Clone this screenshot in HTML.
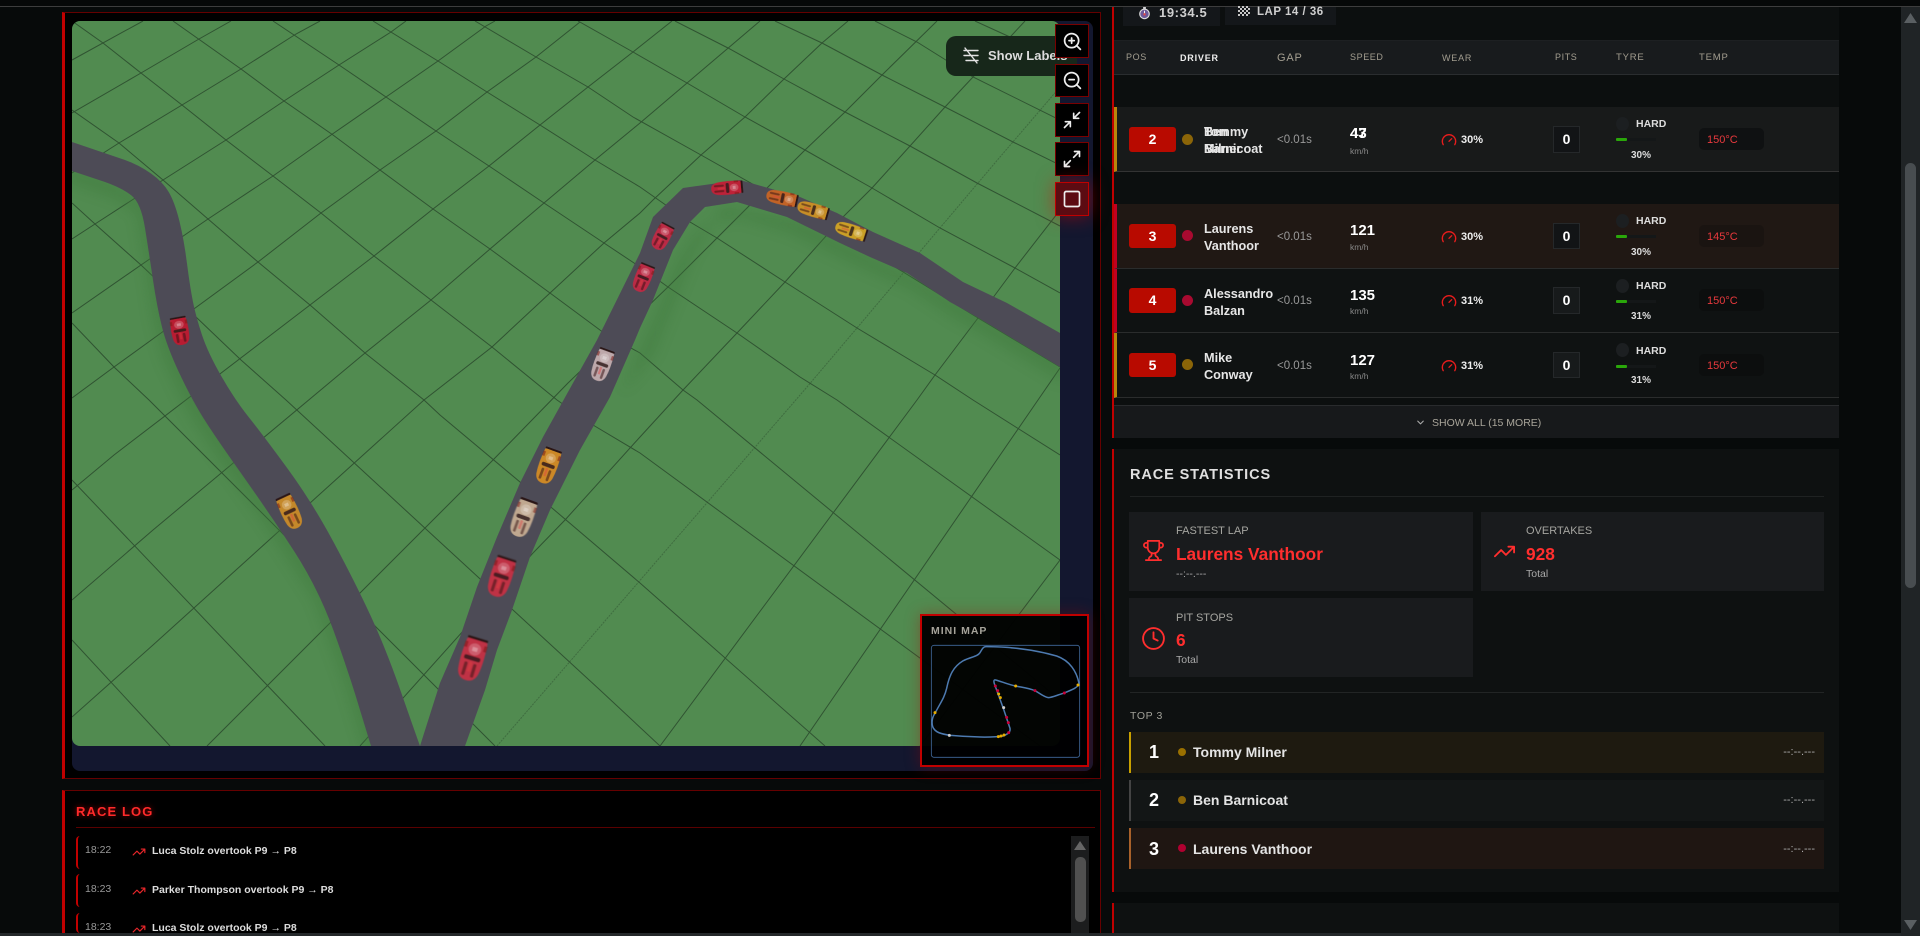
<!DOCTYPE html>
<html lang="en"><head><meta charset="utf-8"><title>Race Dashboard</title>
<style>
html,body{margin:0;padding:0;width:1920px;height:936px;overflow:hidden;background:#070a0a;font-family:"Liberation Sans",sans-serif;color:#ddd}
.a{position:absolute;box-sizing:border-box}
.t{position:absolute;white-space:nowrap;line-height:16px;height:16px}
.th{font-size:9.5px;letter-spacing:.8px;color:#a39e90}
.row{position:absolute;left:1114px;width:725px;box-sizing:border-box;border-bottom:1px solid #2a2c2c}
.badge{position:absolute;left:1129px;width:47px;background:#b80a00;border-radius:3px;color:#fff;font-weight:700;font-size:14px;text-align:center}
.dot{position:absolute;left:1182px;width:11px;height:11px;border-radius:50%}
.name{position:absolute;left:1204px;font-size:12.7px;font-weight:700;line-height:17px;color:#e6e6e6;white-space:nowrap}
.gap{font-size:11.5px;color:#999}
.sp{font-size:15px;font-weight:700;color:#fff}
.kmh{font-size:8.5px;color:#888}
.pct{font-size:11px;font-weight:700;color:#eee}
.pit{position:absolute;left:1553px;width:27px;border:1px solid #25282a;background:#121416;color:#fff;font-weight:700;font-size:14px;text-align:center;box-sizing:border-box}
.tc{position:absolute;left:1616px;width:13px;height:14px;border-radius:50%;background:#1c1f21}
.hard{font-size:10.5px;font-weight:700;color:#ddd;left:1636px}
.bar{position:absolute;left:1616px;width:40px;height:3px;background:#141718}
.bar i{display:block;width:11px;height:3px;background:#2aa70a;border-radius:1px}
.tp{font-size:10px;font-weight:700;color:#ddd;left:1631px}
.chip{position:absolute;left:1699px;width:65px;height:22px;border-radius:5px;background:#0f1112;color:#e8393d;font-size:11px;line-height:24px;padding-left:8px;box-sizing:border-box}
.card{position:absolute;background:#191b1d}
.lbl{font-size:11px;color:#a5a5a0}
.val{font-size:17.3px;font-weight:700;color:#ff2e2e}
.sub{font-size:10.5px;color:#aaa}
.ctl{position:absolute;left:1055px;width:34px;height:34px;background:#000;border:1px solid #7a0000;box-sizing:border-box;display:flex;align-items:center;justify-content:center}
.tr{position:absolute;left:1129px;width:695px;height:41px;box-sizing:border-box}
.tr .n{position:absolute;left:18px;top:0;line-height:41px;font-size:18px;font-weight:700;color:#fff}
.tr .d{position:absolute;left:47px;top:16px;width:8px;height:8px;border-radius:50%}
.tr .m{position:absolute;left:62px;top:0;line-height:41px;font-size:14px;font-weight:700;color:#e4e4e4;white-space:nowrap}
.tr .r{position:absolute;right:9px;top:0;line-height:41px;font-size:11px;color:#aaa}
.li{position:absolute;left:76px;width:6px;height:33px;border-left:2px solid #c00000;border-radius:4px 0 0 4px;box-sizing:border-box}
.lt{font-size:10.5px;color:#999;left:85px}
.lx{font-size:10.5px;font-weight:700;color:#ddd;left:152px}
svg.i{fill:none;stroke-linecap:round;stroke-linejoin:round}
</style></head><body>

<!-- top bar -->
<div class="a" style="left:0;top:0;width:1920px;height:6px;background:#060808"></div>
<div class="a" style="left:0;top:6px;width:1920px;height:1px;background:#3d3d3d"></div>

<!-- left panel -->
<div class="a" style="left:62px;top:12px;width:1039px;height:767px;background:#000;border:1px solid #650000;border-left:3px solid #c00000"></div>
<div class="a" style="left:72px;top:21px;width:1021px;height:750px;background:#13172f;border-radius:8px"></div>

<svg class="a" style="left:0;top:0" width="1920" height="936" viewBox="0 0 1920 936">
<defs>
<clipPath id="gc"><rect x="72" y="21" width="988" height="725" rx="8"/></clipPath>
<filter id="bl" x="-20%" y="-20%" width="140%" height="140%"><feGaussianBlur stdDeviation="6"/></filter>
<filter id="soft" x="-5%" y="-5%" width="110%" height="110%"><feGaussianBlur stdDeviation=".35"/></filter>
<filter id="cb" x="-30%" y="-30%" width="160%" height="160%"><feGaussianBlur stdDeviation=".45"/></filter>
<g id="car" filter="url(#cb)">
<path d="M-10-19Q-5-21 0-20Q5-21 10-19Q12 0 10 13Q8 22 0 22Q-8 22-10 13Q-12 0-10-19Z"/>
<rect x="-10" y="-22" width="20" height="2.5" rx="1" fill="#2a1616"/>
<ellipse cx="0" cy="-10" rx="6" ry="6" fill="#fff" opacity=".22"/>
<rect x="-2.5" y="-12" width="5" height="4" fill="#fff" opacity=".3"/>
<rect x="-8" y="-3" width="16" height="4.5" rx="2" fill="#321c1c" opacity=".85"/>
<rect x="-6" y="4" width="3.2" height="14" rx="1.5" fill="#3a1414" opacity=".55"/>
<rect x="2.8" y="4" width="3.2" height="14" rx="1.5" fill="#3a1414" opacity=".55"/>
<rect x="-1.5" y="3" width="3" height="10" fill="#e04040" opacity=".45"/>
<rect x="-11" y="-16" width="3" height="6" fill="#7a1a14" opacity=".55"/>
<rect x="8" y="-16" width="3" height="6" fill="#7a1a14" opacity=".55"/>
</g>
</defs>
<g clip-path="url(#gc)">
<rect x="72" y="21" width="988" height="725" fill="#518b50"/>
<g fill="none" stroke="#2b4a2d" stroke-width="1" opacity=".85">
<!-- family up-right -->
<path d="M72 60L143 21"/>
<path d="M72 113L141 73L199 39L231 21"/>
<path d="M72 173L119 143L182 105L241 69L296 34L320 21"/>
<path d="M72 239L95 224L163 180L226 140L284 101L339 65L391 32L406 21"/>
<path d="M72 313L141 265L208 219L273 176L331 135L386 97L438 61L486 26L495 21"/>
<path d="M72 398L114 367L161 333L258 262L321 213L380 170L436 131L487 92L536 57L580 22"/>
<path d="M72 490L114 455L310 305L374 256L433 209L489 166L540 125L588 87L633 52L672 21"/>
<path d="M72 600L153 530L365 353L431 300L490 249L544 203L595 160L640 123L760 21"/>
<path d="M72 717L153 645L424 400L492 347L550 293L604 243L640 213L653 200L701 155L745 117L784 79L822 43L848 21"/>
<path d="M207 746L440 513L493 460L568 383L668 287L717 238L805 150L845 112L882 75L937 21"/>
<path d="M360 746L533 553L565 520L640 437L683 390L737 333L785 282L843 217L872 188L910 146L945 107L973 77L1025 21"/>
<path d="M497 746L807 387L857 328L900 277L923 248L1000 157L1060 87" opacity=".55" stroke-dasharray="2 1"/>
<path d="M660 746L917 400L935 375L978 318L995 295L1015 268L1060 210"/>
<path d="M800 746L1038 400L1060 368"/>
<path d="M920 746L1060 560"/>
<!-- family down-right -->
<path d="M72 21L103 43L141 73L182 105L226 140L273 176L321 213L374 256L431 300L492 347L557 400L593 425L640 453L1040 746"/>
<path d="M173 21L241 69L284 101L333 135L380 170L433 209L490 249L550 293L604 333L640 353L683 390L697 400L1060 700"/>
<path d="M273 21L339 65L386 97L436 131L489 166L544 203L604 243L640 267L668 287L737 333L800 377L837 400L1060 560"/>
<path d="M373 21L438 61L487 92L540 125L595 160L640 187L690 222L717 238L785 282L857 328L935 375L973 400L1060 455"/>
<path d="M475 21L536 57L588 87L633 117L701 155L843 235L978 318L1060 367"/>
<path d="M578 21L633 52L687 83L745 117L805 150L872 188L940 228L1015 268L1060 293"/>
<path d="M675 21L728 48L784 79L845 112L910 146L977 183L1060 226"/>
<path d="M775 21L822 43L882 75L945 107L1015 143L1060 165"/>
<path d="M875 21L917 42L973 77L1060 120"/>
<path d="M975 21L1010 37L1060 60"/>
<path d="M72 110L119 143L163 180L208 219L258 262L310 305L365 353L424 400L440 415L520 482L552 508L640 583L825 746"/>
<path d="M72 203L95 224L141 265L196 317L241 360L286 400L440 542L478 577L513 610L600 690L660 746"/>
<path d="M72 323L114 367L149 400L495 746"/>
<path d="M72 480L325 746"/>
<path d="M72 640L170 746"/>
</g>
<g fill="#3f7a3d" opacity=".45" filter="url(#bl)">
<polygon transform="translate(-4,12)" points="72,171 122,188 141,203 149,253 157,307 167,347 192,400 216,438 270,514 318,588 349,673 371,746 395,746 330,570 230,420 185,340 165,200 120,170 72,150"/>
<polygon transform="translate(3,16)" points="1060,367 977,317 950,302 907,273 870,257 840,243 787,217 737,202 705,207 690,222 673,250 653,300 640,328 620,375 650,340 690,240 720,190 800,205 900,255 1060,340"/>
</g>
<g fill="#4d4c57" filter="url(#soft)">
<path d="M72 142L125 160Q139 165 151 173.5Q163 182 169 192.5Q175 203 179.5 221.5Q184 240 187 263.5Q190 287 193 302Q196 317 202 335Q208 353 221.5 376.5Q235 400 249 417.5Q263 435 287.5 468.5Q312 502 333.5 542Q355 582 370.5 615.5Q386 649 401 692Q416 735 420 746L371 746L360 710Q349 673 333.5 630.5Q318 588 294 551Q270 514 243 476Q216 438 204 419Q192 400 179.5 373.5Q167 347 162 327Q157 307 153 280Q149 253 145 228Q141 203 131.5 195.5Q122 188 105 182L72 171Z"/>
<polygon points="420,746 440,683 460,637 477,587 497,537 520,483 543,437 573,383 597,340 640,253 653,217 683,188 740,180 800,197 837,213 873,232 920,253 963,282 1007,303 1060,333 1060,367 977,317 950,302 907,273 870,257 840,243 787,217 737,202 705,207 690,222 673,250 653,300 640,328 635,340 610,397 580,450 550,510 530,557 512,610 497,650 485,690 465,746"/>
</g>
<use href="#car" fill="#b81c30" transform="translate(180,331) rotate(-10) scale(.8,.64)"/>
<use href="#car" fill="#c4882a" transform="translate(290,512) rotate(-25) scale(.8,.8)"/>
<use href="#car" fill="#bda8aa" transform="translate(602,365) rotate(20) scale(.78,.75)"/>
<use href="#car" fill="#cc8828" transform="translate(548,466) rotate(20) scale(.85,.82)"/>
<use href="#car" fill="#c0a890" transform="translate(523,518) rotate(20) scale(.9,.88)"/>
<use href="#car" fill="#bf3044" transform="translate(501,577) rotate(18) scale(.98,.92)"/>
<use href="#car" fill="#bf3044" transform="translate(472,659) rotate(17) scale(1.05,1)"/>
<use href="#car" fill="#bb2c44" transform="translate(662,237) rotate(28) scale(.72,.62)"/>
<use href="#car" fill="#bb2c44" transform="translate(643,278) rotate(22) scale(.74,.65)"/>
<use href="#car" fill="#bd2238" transform="translate(727,188) rotate(85) scale(.62,.72)"/>
<use href="#car" fill="#c26428" transform="translate(782,198) rotate(102) scale(.62,.72)"/>
<use href="#car" fill="#c68e28" transform="translate(813,210) rotate(106) scale(.62,.72)"/>
<use href="#car" fill="#cba028" transform="translate(851,231) rotate(108) scale(.62,.74)"/>
</g>
</svg>

<!-- show labels -->
<div class="a" style="left:946px;top:36px;width:131px;height:40px;background:#17271a;border-radius:10px"></div>
<svg class="i a" style="left:963px;top:47px" width="16" height="17" viewBox="0 0 16 17" stroke="#e2e2e2" stroke-width="1.4"><path d="M1 3.5H15M1 8.5H15M3 13.5H15M2 1L14 16"/></svg>
<div class="t" style="left:988px;top:48px;font-size:13px;font-weight:700;color:#dcdcdc">Show Labels</div>

<!-- controls -->
<div class="ctl" style="top:24px"><svg class="i" width="21" height="21" viewBox="0 0 24 24" stroke="#eee" stroke-width="2"><circle cx="11" cy="11" r="8"/><path d="M21 21l-4.35-4.35M11 8v6M8 11h6"/></svg></div>
<div class="ctl" style="top:64px;height:33px"><svg class="i" width="21" height="21" viewBox="0 0 24 24" stroke="#eee" stroke-width="2"><circle cx="11" cy="11" r="8"/><path d="M21 21l-4.35-4.35M8 11h6"/></svg></div>
<div class="ctl" style="top:103px"><svg class="i" width="20" height="20" viewBox="0 0 24 24" stroke="#eee" stroke-width="2"><path d="M4 14h6v6M20 10h-6V4M14 10l7-7M3 21l7-7"/></svg></div>
<div class="ctl" style="top:142px"><svg class="i" width="20" height="20" viewBox="0 0 24 24" stroke="#eee" stroke-width="2"><path d="M15 3h6v6M9 21H3v-6M21 3l-7 7M3 21l7-7"/></svg></div>
<div class="ctl" style="top:182px;background:#5c0b12;border-color:#c00000;box-shadow:0 0 18px rgba(230,0,0,.5)"><svg class="i" width="20" height="20" viewBox="0 0 24 24" stroke="#eee" stroke-width="2"><rect x="3" y="3" width="18" height="18" rx="2"/></svg></div>

<!-- mini map -->
<div class="a" style="left:920px;top:614px;width:169px;height:153px;background:rgba(0,0,0,.96);border:2px solid #c00000;box-shadow:0 0 14px rgba(170,0,0,.35)"></div>
<div class="t" style="left:931px;top:623px;font-size:10.5px;font-weight:700;letter-spacing:1px;color:#a6a39a">MINI MAP</div>
<svg class="a" style="left:900px;top:600px" width="220" height="180" viewBox="0 0 660 540">
<rect x="94" y="136" width="445" height="336" rx="8" fill="none" stroke="#41699c" stroke-width="2.4"/>
<path d="M258 140C330 140 400 148 470 168C510 182 530 215 537 250C535 262 520 268 490 280C470 286 455 293 445 293C430 290 420 280 405 272C385 264 365 262 347 258C325 254 300 243 287 240C280 238 281 246 284 254L310 325L330 385C332 398 322 402 310 408C280 413 210 412 150 406C125 402 105 398 98 380C94 365 98 350 105 340C120 310 133 295 140 265C148 225 160 200 190 182C215 170 232 170 240 158C247 146 250 140 258 140Z" fill="none" stroke="#4d7ab0" stroke-width="4.5"/>
<g fill="#e6ac00"><circle cx="347" cy="258" r="4.5"/><circle cx="534" cy="255" r="4.5"/><circle cx="105" cy="338" r="4.5"/><circle cx="296" cy="282" r="4.5"/><circle cx="301" cy="293" r="4.5"/><circle cx="295" cy="410" r="4.5"/><circle cx="303" cy="408" r="4.5"/><circle cx="312" cy="405" r="4.5"/></g>
<g fill="#c8003a"><circle cx="286" cy="258" r="4.5"/><circle cx="293" cy="272" r="4.5"/><circle cx="405" cy="272" r="4.5"/><circle cx="493" cy="279" r="4.5"/><circle cx="320" cy="352" r="4.5"/><circle cx="325" cy="368" r="4.5"/><circle cx="326" cy="398" r="4.5"/></g>
<g fill="#cfcfcf"><circle cx="311" cy="323" r="4.5"/><circle cx="148" cy="406" r="4.5"/></g>
</svg>

<!-- race log -->
<div class="a" style="left:62px;top:790px;width:1039px;height:143px;background:#000;border-top:1px solid #650000;border-right:1px solid #650000;border-left:3px solid #c00000"></div>
<div class="t" style="left:76px;top:804px;font-size:13px;font-weight:700;letter-spacing:1.1px;color:#ff2a2a;text-shadow:0 0 6px rgba(255,0,0,.6)">RACE LOG</div>
<div class="a" style="left:76px;top:827px;width:1019px;height:1px;background:#5a0000"></div>
<div class="li" style="top:836px"></div><div class="t lt" style="top:842px">18:22</div>
<svg class="i a" style="left:132px;top:845px" width="14" height="14" viewBox="0 0 24 24" stroke="#e8262a" stroke-width="2"><path d="M22 7l-8.5 8.5-5-5L2 17M16 7h6v6"/></svg>
<div class="t lx" style="top:843px">Luca Stolz overtook P9 → P8</div>
<div class="li" style="top:874px"></div><div class="t lt" style="top:881px">18:23</div>
<svg class="i a" style="left:132px;top:884px" width="14" height="14" viewBox="0 0 24 24" stroke="#e8262a" stroke-width="2"><path d="M22 7l-8.5 8.5-5-5L2 17M16 7h6v6"/></svg>
<div class="t lx" style="top:882px">Parker Thompson overtook P9 → P8</div>
<div class="li" style="top:913px;height:20px"></div><div class="t lt" style="top:919px">18:23</div>
<svg class="i a" style="left:132px;top:922px" width="14" height="14" viewBox="0 0 24 24" stroke="#e8262a" stroke-width="2"><path d="M22 7l-8.5 8.5-5-5L2 17M16 7h6v6"/></svg>
<div class="t lx" style="top:920px">Luca Stolz overtook P9 → P8</div>
<div class="a" style="left:1071px;top:836px;width:18px;height:97px;background:#1c1d1e"></div>
<div class="a" style="left:1075px;top:857px;width:11px;height:65px;background:#505050;border-radius:5px"></div>
<svg class="a" style="left:1074px;top:841px" width="12" height="9"><path d="M6 0L12 9H0Z" fill="#666"/></svg>

<!-- right column -->
<div class="a" style="left:1112px;top:7px;width:727px;height:431px;background:#0c0f0f;border-left:2px solid #c00000"></div>
<div class="a" style="left:1123px;top:7px;width:97px;height:19px;background:#14171a"></div>
<div class="a" style="left:1225px;top:7px;width:111px;height:18px;background:#14171a"></div>
<svg class="a" style="left:1139px;top:6px" width="11" height="14" viewBox="0 0 12 15"><circle cx="6" cy="8.5" r="5.2" fill="#6d5a9a" stroke="#dcdcdc" stroke-width="1.2"/><rect x="4.5" y="1" width="3" height="2" fill="#ddd"/><path d="M6 8.5V5" stroke="#fff"/><circle cx="6" cy="9" r="1.3" fill="#e04848"/></svg>
<div class="t" style="left:1159px;top:5px;font-size:13px;font-weight:700;letter-spacing:.6px;color:#cfcfcf">19:34.5</div>
<svg class="a" style="left:1238px;top:6px" width="12" height="11" viewBox="0 0 6 5.5"><path d="M0 0h1v1h-1zM2 0h1v1h-1zM4 0h1v1h-1zM1 1h1v1h-1zM3 1h1v1h-1zM5 1h1v1h-1zM0 2h1v1h-1zM2 2h1v1h-1zM4 2h1v1h-1zM1 3h1v1h-1zM3 3h1v1h-1zM5 3h1v1h-1zM0 4h1v1h-1zM2 4h1v1h-1zM4 4h1v1h-1z" fill="#c8c8c8"/></svg>
<div class="t" style="left:1257px;top:4px;font-size:11.5px;font-weight:700;letter-spacing:.5px;color:#cfcfcf">LAP 14 / 36</div>

<!-- table head -->
<div class="a" style="left:1114px;top:40px;width:725px;height:35px;background:#181b1d;border-bottom:1px solid #2a2d2f;border-top:1px solid #1d2022"></div>
<div class="t th" style="left:1126px;top:49px;font-size:9px;letter-spacing:.6px">POS</div>
<div class="t th" style="left:1180px;top:50px;color:#eee;font-weight:700;font-size:9px">DRIVER</div>
<div class="t th" style="left:1277px;top:50px;font-size:11px">GAP</div>
<div class="t th" style="left:1350px;top:49px;font-size:9px;letter-spacing:.6px">SPEED</div>
<div class="t th" style="left:1442px;top:50px;font-size:9px">WEAR</div>
<div class="t th" style="left:1555px;top:49px;font-size:9px;letter-spacing:.6px">PITS</div>
<div class="t th" style="left:1616px;top:50px">TYRE</div>
<div class="t th" style="left:1699px;top:50px">TEMP</div>

<!-- rows -->
<div class="row" style="top:107px;height:65px;background:#181a1a;border-left:3px solid #b8860b;border-bottom-color:#333"></div>
<div class="row" style="top:204px;height:65px;background:#201814;border-left:3px solid #c00020"></div>
<div class="row" style="top:269px;height:64px;background:#0f1212;border-left:3px solid #c00020"></div>
<div class="row" style="top:333px;height:65px;background:#0f1212;border-left:3px solid #b8860b"></div>

<!-- row 2 -->
<div class="badge" style="top:127px;height:25px;line-height:25px">2</div>
<div class="dot" style="top:134px;background:#8b6508"></div>
<div class="name" style="top:124px">Tommy<br>Milner</div><div class="name" style="top:124px">Ben<br>Barnicoat</div>
<div class="t gap" style="left:1277px;top:132px">&lt;0.01s</div>
<div class="t sp" style="left:1350px;top:126px">47</div><div class="t sp" style="left:1350px;top:126px">43</div>
<div class="t kmh" style="left:1350px;top:143px">km/h</div>
<svg class="i a" style="left:1441px;top:132px" width="16" height="16" viewBox="0 0 24 24" stroke="#e81c1c" stroke-width="2"><path d="M12 14l4-4M3.34 19a10 10 0 1 1 17.32 0"/></svg>
<div class="t pct" style="left:1461px;top:132px">30%</div>
<div class="pit" style="top:126px;height:27px;line-height:25px">0</div>
<div class="tc" style="top:117px"></div><div class="t hard" style="top:116px">HARD</div>
<div class="bar" style="top:138px"><i></i></div><div class="t tp" style="top:148px">30%</div>
<div class="chip" style="top:128px">150°C</div>

<!-- row 3 -->
<div class="badge" style="top:224px;height:24px;line-height:24px">3</div>
<div class="dot" style="top:230px;background:#a80a30"></div>
<div class="name" style="top:221px">Laurens<br>Vanthoor</div>
<div class="t gap" style="left:1277px;top:229px">&lt;0.01s</div>
<div class="t sp" style="left:1350px;top:223px">121</div>
<div class="t kmh" style="left:1350px;top:239px">km/h</div>
<svg class="i a" style="left:1441px;top:229px" width="16" height="16" viewBox="0 0 24 24" stroke="#e81c1c" stroke-width="2"><path d="M12 14l4-4M3.34 19a10 10 0 1 1 17.32 0"/></svg>
<div class="t pct" style="left:1461px;top:229px">30%</div>
<div class="pit" style="top:223px;height:26px;line-height:24px">0</div>
<div class="tc" style="top:214px"></div><div class="t hard" style="top:213px">HARD</div>
<div class="bar" style="top:235px"><i></i></div><div class="t tp" style="top:245px">30%</div>
<div class="chip" style="top:225px;background:#1a1411">145°C</div>

<!-- row 4 -->
<div class="badge" style="top:288px;height:25px;line-height:25px">4</div>
<div class="dot" style="top:295px;background:#a80a30"></div>
<div class="name" style="top:286px">Alessandro<br>Balzan</div>
<div class="t gap" style="left:1277px;top:293px">&lt;0.01s</div>
<div class="t sp" style="left:1350px;top:288px">135</div>
<div class="t kmh" style="left:1350px;top:303px">km/h</div>
<svg class="i a" style="left:1441px;top:293px" width="16" height="16" viewBox="0 0 24 24" stroke="#e81c1c" stroke-width="2"><path d="M12 14l4-4M3.34 19a10 10 0 1 1 17.32 0"/></svg>
<div class="t pct" style="left:1461px;top:293px">31%</div>
<div class="pit" style="top:287px;height:27px;line-height:25px;background:#171a1b">0</div>
<div class="tc" style="top:279px"></div><div class="t hard" style="top:278px">HARD</div>
<div class="bar" style="top:300px"><i></i></div><div class="t tp" style="top:309px">31%</div>
<div class="chip" style="top:289px;background:#0c0e0e">150°C</div>

<!-- row 5 -->
<div class="badge" style="top:353px;height:24px;line-height:24px">5</div>
<div class="dot" style="top:359px;background:#8b6508"></div>
<div class="name" style="top:350px">Mike<br>Conway</div>
<div class="t gap" style="left:1277px;top:358px">&lt;0.01s</div>
<div class="t sp" style="left:1350px;top:353px">127</div>
<div class="t kmh" style="left:1350px;top:368px">km/h</div>
<svg class="i a" style="left:1441px;top:358px" width="16" height="16" viewBox="0 0 24 24" stroke="#e81c1c" stroke-width="2"><path d="M12 14l4-4M3.34 19a10 10 0 1 1 17.32 0"/></svg>
<div class="t pct" style="left:1461px;top:358px">31%</div>
<div class="pit" style="top:352px;height:26px;line-height:24px;background:#171a1b">0</div>
<div class="tc" style="top:343px"></div><div class="t hard" style="top:343px">HARD</div>
<div class="bar" style="top:365px"><i></i></div><div class="t tp" style="top:373px">31%</div>
<div class="chip" style="top:354px;background:#0c0e0e">150°C</div>

<!-- show all -->
<div class="a" style="left:1114px;top:405px;width:725px;height:33px;background:#17191b;border-top:1px solid #292b2d"></div>
<svg class="i a" style="left:1415px;top:417px" width="11" height="11" viewBox="0 0 24 24" stroke="#aaa" stroke-width="2.4"><path d="M6 9l6 6 6-6"/></svg>
<div class="t" style="left:1432px;top:415px;font-size:10.5px;color:#a9a59a">SHOW ALL (15 MORE)</div>

<!-- stats panel -->
<div class="a" style="left:1112px;top:449px;width:727px;height:443px;background:#0e1111;border-left:2px solid #c00000"></div>
<div class="t" style="left:1130px;top:467px;font-size:14.5px;font-weight:700;letter-spacing:.9px;color:#e0e0e0">RACE STATISTICS</div>
<div class="a" style="left:1130px;top:496px;width:694px;height:1px;background:#1f2222"></div>

<div class="card" style="left:1129px;top:512px;width:344px;height:79px"></div>
<div class="card" style="left:1481px;top:512px;width:343px;height:79px"></div>
<div class="card" style="left:1129px;top:598px;width:344px;height:79px"></div>
<svg class="i a" style="left:1142px;top:539px" width="23" height="23" viewBox="0 0 24 24" stroke="#ff2e2e" stroke-width="1.8"><path d="M6 9H4.5a2.5 2.5 0 0 1 0-5H6M18 9h1.5a2.5 2.5 0 0 0 0-5H18M4 22h16M10 14.66V17c0 .55-.47.98-.97 1.21C7.85 18.75 7 20.24 7 22M14 14.66V17c0 .55.47.98.97 1.21C16.15 18.75 17 20.24 17 22M18 2H6v7a6 6 0 0 0 12 0V2Z"/></svg>
<div class="t lbl" style="left:1176px;top:523px">FASTEST LAP</div>
<div class="t val" style="left:1176px;top:546px">Laurens Vanthoor</div>
<div class="t sub" style="left:1176px;top:566px">--:--.---</div>
<svg class="i a" style="left:1493px;top:540px" width="23" height="23" viewBox="0 0 24 24" stroke="#ff2e2e" stroke-width="1.9"><path d="M22 7l-8.5 8.5-5-5L2 17M16 7h6v6"/></svg>
<div class="t lbl" style="left:1526px;top:523px">OVERTAKES</div>
<div class="t val" style="left:1526px;top:546px">928</div>
<div class="t sub" style="left:1526px;top:566px">Total</div>
<svg class="i a" style="left:1141px;top:626px" width="25" height="25" viewBox="0 0 24 24" stroke="#ff2e2e" stroke-width="1.8"><circle cx="12" cy="12" r="10"/><path d="M12 6v6l4 2"/></svg>
<div class="t lbl" style="left:1176px;top:610px">PIT STOPS</div>
<div class="t val" style="left:1176px;top:632px">6</div>
<div class="t sub" style="left:1176px;top:652px">Total</div>

<div class="a" style="left:1130px;top:692px;width:694px;height:1px;background:#222525"></div>
<div class="t" style="left:1130px;top:708px;font-size:10.5px;letter-spacing:.6px;color:#a0a098">TOP 3</div>

<div class="tr" style="top:732px;background:#1e1a10;border-left:2px solid #c8a000"><span class="n">1</span><span class="d" style="background:#9a7000"></span><span class="m">Tommy Milner</span><span class="r">--:--.---</span></div>
<div class="tr" style="top:780px;background:#131616;border-left:2px solid #444"><span class="n">2</span><span class="d" style="background:#8b6508"></span><span class="m">Ben Barnicoat</span><span class="r">--:--.---</span></div>
<div class="tr" style="top:828px;background:#1f1612;border-left:2px solid #a8612a"><span class="n" style="line-height:43px">3</span><span class="d" style="background:#b00030"></span><span class="m" style="line-height:43px">Laurens Vanthoor</span><span class="r" style="line-height:43px">--:--.---</span></div>

<div class="a" style="left:1112px;top:903px;width:727px;height:33px;background:#0e1111;border-left:2px solid #c00000"></div>

<!-- bottom strip -->
<div class="a" style="left:0;top:933px;width:1920px;height:3px;background:#24282a"></div>

<!-- page scrollbar -->
<div class="a" style="left:1901px;top:7px;width:19px;height:929px;background:#202426"></div>
<div class="a" style="left:1905px;top:163px;width:11px;height:425px;background:#484d50;border-radius:6px"></div>
<svg class="a" style="left:1904px;top:13px" width="13" height="10"><path d="M6.5 0L13 10H0Z" fill="#5a5f62"/></svg>
<svg class="a" style="left:1904px;top:920px" width="13" height="10"><path d="M0 0H13L6.5 10Z" fill="#5a5f62"/></svg>

</body></html>
